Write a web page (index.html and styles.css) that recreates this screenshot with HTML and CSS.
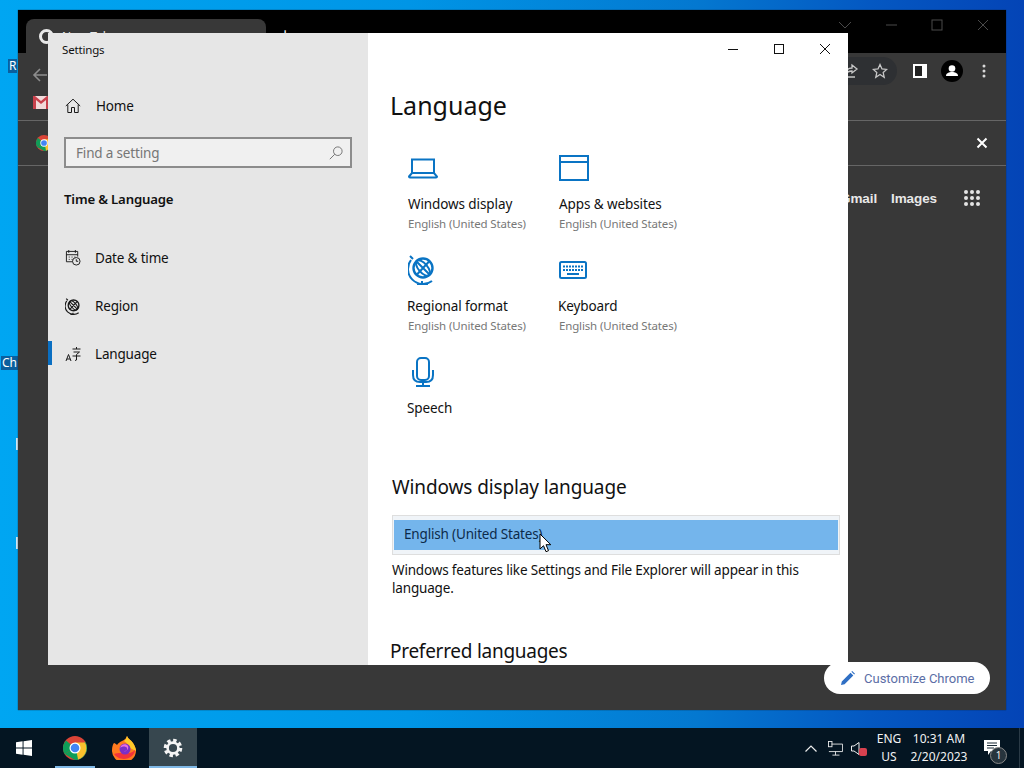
FILE: index.html
```html
<!DOCTYPE html>
<html lang="en">
<head>
  <meta charset="UTF-8" />
  <title>Settings - Language</title>
  <link rel="stylesheet" href="styles.css">
</head>
<body>
  <div class="desktop">
    <!-- Desktop icon labels, mostly hidden by the browser -->
    <span class="desk-label label-r">R</span>
    <span class="desk-label label-ch">Ch</span>
    <span class="desk-tick tick-one"></span>
    <span class="desk-tick tick-two"></span>

    <!-- Chrome window behind Settings -->
    <div class="chrome">
      <div class="tabstrip">
        <div class="tab">
          <span class="tab-icon"></span>
          <span class="tab-title">New Tab</span>
        </div>
        <span class="tab-plus">+</span>
        <div class="win-controls dim">
          <svg width="46" height="30" viewBox="0 0 46 30"><path d="M17 12l6 6 6-6" /></svg>
          <svg width="46" height="30" viewBox="0 0 46 30"><path d="M18 15h11" /></svg>
          <svg width="46" height="30" viewBox="0 0 46 30"><rect x="18" y="10" width="10" height="10" /></svg>
          <svg width="46" height="30" viewBox="0 0 46 30"><path d="M18 10l10 10M28 10L18 20" /></svg>
        </div>
      </div>
      <div class="toolbar">
        <div class="toolbar-row">
          <svg class="back-arrow" width="16" height="16" viewBox="0 0 16 16"><path d="M15 8H2M8 2L2 8l6 6" /></svg>
          <div class="omnibox">
            <svg width="16" height="16" viewBox="0 0 16 16" class="tool-line"><path d="M9 2l5 4-5 4V8C6 8 4 9 3 11c0-4 2-6 6-6zM3 14h9" /></svg>
            <svg width="16" height="16" viewBox="0 0 16 16" class="tool-line"><path d="M8 1.500l2 4.400 4.700.5-3.500 3.200 1 4.700L8 11.500l-4.200 2.800 1-4.700L1.300 6.400 6 5.900z" /></svg>
          </div>
          <svg class="tool-panel" width="14" height="14" viewBox="0 0 14 14"><path d="M0 0h14v14H0z" fill="#fff" /><path d="M2 2h7v10H2z" fill="#222" /></svg>
          <svg class="tool-avatar" width="22" height="22" viewBox="0 0 22 22"><circle cx="11" cy="11" r="11" fill="#000" /><circle cx="11" cy="8.500" r="3.300" fill="#fff" /><path d="M5 16c0-3 3-4 6-4s6 1 6 4z" fill="#fff" /></svg>
          <svg class="tool-kebab" width="4" height="14" viewBox="0 0 4 14"><circle cx="2" cy="2" r="1.500" /><circle cx="2" cy="7" r="1.500" /><circle cx="2" cy="12" r="1.500" /></svg>
        </div>
        <svg class="gmail-mark" width="16" height="13" viewBox="0 0 16 13"><path d="M0 0h16v13H0z" fill="#f2dada" /><path d="M0 0v13h3V4l5 4 5-4v9h3V0h-2L8 5 2 0z" fill="#c8414c" /></svg>
      </div>
      <div class="infobar">
        <svg class="chrome-mark" width="16" height="16" viewBox="0 0 24 24">
          <circle cx="12" cy="12" r="12" fill="#db4437" />
          <path d="M12 12L1.600 18A12 12 0 0 1 3 4.500z" fill="#0f9d58" />
          <path d="M12 12l10.400-6A12 12 0 0 1 12 24L1.600 18z" fill="#0f9d58" />
          <path d="M12 6.500h10A12 12 0 0 1 15 23.600z" fill="#fbc02d" />
          <circle cx="12" cy="12" r="5.500" fill="#fff" />
          <circle cx="12" cy="12" r="4.300" fill="#4285f4" />
        </svg>
        <svg class="infobar-close" width="12" height="12" viewBox="0 0 12 12"><path d="M1.500 1.500l9 9M10.500 1.500l-9 9" /></svg>
      </div>
      <div class="ntp">
        <div class="ntp-links">
          <span>Gmail</span>
          <span>Images</span>
          <svg width="16" height="16" viewBox="0 0 16 16">
            <circle cx="2" cy="2" r="2" /><circle cx="8" cy="2" r="2" /><circle cx="14" cy="2" r="2" />
            <circle cx="2" cy="8" r="2" /><circle cx="8" cy="8" r="2" /><circle cx="14" cy="8" r="2" />
            <circle cx="2" cy="14" r="2" /><circle cx="8" cy="14" r="2" /><circle cx="14" cy="14" r="2" />
          </svg>
        </div>
        <div class="customize">
          <svg width="14" height="14" viewBox="0 0 14 14"><path d="M0 14l.8-3.600L9.500 1.700l2.800 2.800-8.700 8.700zM10.400.8l.8-.8 2.800 2.800-.8.800z" /></svg>
          <span>Customize Chrome</span>
        </div>
      </div>
    </div>

    <!-- Settings window -->
    <div class="settings">
      <aside class="sidebar">
        <div class="app-title">Settings</div>
        <div class="nav-item nav-home">
          <svg width="16" height="16" viewBox="0 0 16 16"><path d="M.8 8L8 1.200 15.200 8M2.800 6.500V14.500H6.500V9.500H9.500V14.500H13.200V6.500" /></svg>
          <span>Home</span>
        </div>
        <div class="search">
          <span>Find a setting</span>
          <svg width="14" height="14" viewBox="0 0 14 14"><circle cx="8.800" cy="5.200" r="4.300" /><path d="M5.800 8.200L.8 13.200" /></svg>
        </div>
        <div class="nav-heading">Time &amp; Language</div>
        <div class="nav-item">
          <svg width="16" height="16" viewBox="0 0 17 17"><path d="M8 12.500H1.500V1.500h12V7M1.500 5h12M4 0v3M11 0v3M4 7.500h1M7 7.500h1M10 7.500h1M4 10h1M7 10h1" /><circle cx="12" cy="12" r="4" /><path d="M12 9.800V12h2" /></svg>
          <span>Date &amp; time</span>
        </div>
        <div class="nav-item">
          <svg width="16" height="17" viewBox="0 0 28 30"><circle cx="15" cy="13" r="9.500" stroke-width="2.400" /><ellipse cx="15" cy="13" rx="4.500" ry="9.500" transform="rotate(-40 15 13)" stroke-width="2" /><path d="M8 6l14 14M21.500 6L8.500 20M2 1l3 3M3 5a15 15 0 0 0 21 21M14 26v3M9 29h11" stroke-width="2" /></svg>
          <span>Region</span>
        </div>
        <div class="nav-item active">
          <svg width="16" height="16" viewBox="0 0 16 16"><path d="M1 15l2.500-6.500L6 15M1.800 13h3.400M7.500 3h8M11.500 1v2M8.500 6h6l-3 2.500M7.500 10h8M11.500 8.500V14l-1.500 .5" /></svg>
          <span>Language</span>
        </div>
      </aside>

      <main class="content">
        <div class="win-controls">
          <svg width="46" height="32" viewBox="0 0 46 32"><path d="M18 16.500h10" /></svg>
          <svg width="46" height="32" viewBox="0 0 46 32"><rect x="18.500" y="11.500" width="9" height="9" /></svg>
          <svg width="46" height="32" viewBox="0 0 46 32"><path d="M18 11l10 10M28 11L18 21" /></svg>
        </div>
        <h1>Language</h1>

        <div class="tiles">
          <div class="tile">
            <div class="tile-icon">
              <svg width="30" height="24" viewBox="0 0 30 24"><path d="M4 17V3.500h22V17M1 20.500L4 17h22l3 3.500q0 1-1 1H2q-1 0-1-1z" /></svg>
            </div>
            <div class="tile-name">Windows display</div>
            <div class="tile-sub">English (United States)</div>
          </div>
          <div class="tile">
            <div class="tile-icon">
              <svg width="30" height="26" viewBox="0 0 30 26"><path d="M1 1h28v24H1zM1 7h28" /></svg>
            </div>
            <div class="tile-name">Apps &amp; websites</div>
            <div class="tile-sub">English (United States)</div>
          </div>
          <div class="tile">
            <div class="tile-icon">
              <svg width="28" height="30" viewBox="0 0 28 30"><circle cx="15" cy="13" r="9.500" stroke-width="2.400" /><ellipse cx="15" cy="13" rx="4.500" ry="9.500" transform="rotate(-40 15 13)" stroke-width="2" /><path d="M8 6l14 14M21.500 6L8.500 20M2 1l3 3M3 5a15 15 0 0 0 21 21M14 26v3M9 29h11" stroke-width="2" /></svg>
            </div>
            <div class="tile-name tight">Regional format</div>
            <div class="tile-sub">English (United States)</div>
          </div>
          <div class="tile">
            <div class="tile-icon">
              <svg width="28" height="18" viewBox="0 0 28 18"><rect x="1" y="1" width="26" height="16" rx="1.500" /><path d="M4 5.500h20M4 9h20" stroke-width="2" stroke-dasharray="2 1" /><path d="M8 13h12" stroke-width="2" /></svg>
            </div>
            <div class="tile-name tight">Keyboard</div>
            <div class="tile-sub">English (United States)</div>
          </div>
          <div class="tile">
            <div class="tile-icon">
              <svg width="27" height="30" viewBox="-3 0 27 30"><rect x="6" y="1" width="12" height="22" rx="4" /><path d="M2 13v5q0 7 7 7h6q7 0 7-7v-5M12 25v3.500M5 29h14" /></svg>
            </div>
            <div class="tile-name tight">Speech</div>
          </div>
        </div>

        <h2 class="lang-heading">Windows display language</h2>
        <div class="lang-select">
          <div class="lang-option">English (United States)</div>
        </div>
        <p class="lang-note">Windows features like Settings and File Explorer will appear in this language.</p>
        <h2 class="pref-heading">Preferred languages</h2>
      </main>
    </div>

    <svg class="cursor" width="13" height="20" viewBox="0 0 13 20"><path d="M1 1v15l3.500-3.300 2.500 6 2.500-1-2.500-6h4.800z" /></svg>
  </div>

  <footer class="taskbar">
    <div class="task-btn start">
      <svg width="16" height="16" viewBox="0 0 17 17"><path d="M0 2.400l7-1v6.700H0zM8 1.300L17 0v8.100H8zM0 9h7v6.700l-7-1zM8 9h9v8l-9-1.300z" /></svg>
    </div>
    <div class="task-btn open">
      <svg width="24" height="24" viewBox="0 0 24 24">
        <circle cx="12" cy="12" r="12" fill="#db4437" />
        <path d="M12 12L1.600 18A12 12 0 0 1 3 4.500z" fill="#0f9d58" />
        <path d="M12 12l10.400-6A12 12 0 0 1 12 24L1.600 18z" fill="#0f9d58" />
        <path d="M12 6.500h10A12 12 0 0 1 15 23.600z" fill="#fbc02d" />
        <circle cx="12" cy="12" r="5.500" fill="#fff" />
        <circle cx="12" cy="12" r="4.300" fill="#4285f4" />
      </svg>
    </div>
    <div class="task-btn firefox">
      <svg width="24" height="24" viewBox="0 0 24 24">
        <path d="M15 0c1 3 4 4 6 7 2 3 3 6 3 8a12 12 0 0 1-24-1c0-3 1-6 2-7 1 0 2 1 3 2 1-2 3-3 5-4 2-1 4-2 5-5z" fill="#ff7a1f" />
        <path d="M15 0c1 3 4 4 6 7 2 3 3 6 3 8l-6-3c-1-3-3-5-6-7 2-1 2-3 3-5z" fill="#ffc928" />
        <path d="M2 18c3 5 12 7 18 2 2-2 3-4 3-6-4 4-10 4-14 3-3 0-5 0-7 1z" fill="#f2333c" />
        <circle cx="13" cy="13" r="5.500" fill="#7a2fc7" />
        <path d="M8 12c2-2 6-2 7 0 1 2-1 4-3 3 3 0 5-2 4-5-2-3-7-2-8 2z" fill="#e86ee0" />
      </svg>
    </div>
    <div class="task-btn current">
      <svg width="20" height="20" viewBox="0 0 20 20"><circle cx="10" cy="10" r="7.400" stroke-width="3.800" stroke-dasharray="3.300 2.500" /><circle cx="10" cy="10" r="5.400" stroke-width="2.600" /></svg>
    </div>

    <div class="tray">
      <svg class="tray-caret" width="12" height="7" viewBox="0 0 12 7"><path d="M.5 6.500L6 1l5.500 5.500" /></svg>
      <svg class="tray-net" width="15" height="15" viewBox="0 0 17 17"><path d="M4 3.500h12.500V12H1M8.500 12v4M5 16h8" /><rect x=".5" y=".5" width="4" height="6" /></svg>
      <div class="tray-sound">
        <svg width="9" height="13" viewBox="0 0 9 13"><path d="M.5 4v5h2.500l5 3.500V.5L3 4z" /></svg>
        <span class="mute-badge"></span>
      </div>
      <div class="tray-lang"><span>ENG</span><span>US</span></div>
      <div class="tray-clock"><span>10:31 AM</span><span>2/20/2023</span></div>
      <div class="tray-notify">
        <svg width="16" height="15" viewBox="0 0 16 15"><path d="M0 0h16v11H7l-3 4v-4H0z" fill="#fff" /><path d="M3 3h10M3 5.500h10M3 8h7" stroke="#1a2a36" /></svg>
        <span class="notify-count">1</span>
      </div>
    </div>
  </footer>
</body>
</html>
```

FILE: styles.css
```css
body {
  margin: 0;
  width: 1024px;
  height: 768px;
  overflow: hidden;
  font-family: "Noto Sans", "Open Sans", sans-serif;
  background: #041522;
}

svg {
  display: block;
  flex: none;
}

.desktop {
  position: relative;
  height: 728px;
  overflow: hidden;
  background: linear-gradient(90deg, #00a6f2 0%, #0095e6 40%, #0478d0 68%, #0458c2 85%, #0444b6 100%);
}

/* Desktop leftovers */
.desk-label {
  position: absolute;
  font-size: 12px;
  line-height: 14px;
  padding: 0 1px;
  color: #fff;
  background: #0a5f9e;
}

.label-r { left: 8px; top: 59px; }
.label-ch { left: 1px; top: 356px; }

.desk-tick {
  position: absolute;
  left: 16px;
  width: 2px;
  height: 12px;
  background: #cfe6f2;
}

.tick-one { top: 438px; }
.tick-two { top: 537px; }

/* Chrome window */
.chrome {
  position: absolute;
  left: 18px;
  top: 10px;
  width: 988px;
  height: 700px;
  display: flex;
  flex-direction: column;
  background: #383838;
  box-shadow: 0 0 1px #123;
  color: #e8e8e8;
}

.tabstrip {
  height: 43px;
  display: flex;
  background: #000;
  padding-left: 8px;
  align-items: flex-end;
}

.tab {
  width: 240px;
  height: 34px;
  display: flex;
  align-items: center;
  gap: 8px;
  padding-left: 13px;
  box-sizing: border-box;
  background: #383838;
  border-radius: 8px 8px 0 0;
  font-size: 12px;
}

.tab-icon {
  width: 9px;
  height: 9px;
  border: 3px solid #e8e8e8;
  border-radius: 50%;
}

.tab-plus {
  margin-left: 14px;
  height: 34px;
  font-size: 18px;
  line-height: 30px;
}

.win-controls {
  display: flex;
  justify-content: flex-end;
  fill: none;
  stroke: #111;
  stroke-width: 1;
}

.tabstrip .win-controls {
  margin-left: auto;
  align-self: flex-start;
}

.win-controls.dim {
  stroke: #4a4a4a;
}

.toolbar {
  height: 68px;
  box-sizing: border-box;
  padding-top: 4px;
  border-bottom: 1px solid #666;
}

.toolbar-row {
  display: flex;
  align-items: flex-start;
}

.back-arrow {
  margin: 10px 0 0 14px;
  fill: none;
  stroke: #8d8d8d;
  stroke-width: 1.600;
}

.gmail-mark {
  margin: 11px 0 0 15px;
}

.omnibox {
  width: 70px;
  height: 28px;
  margin-left: 779px;
  display: flex;
  align-items: center;
  justify-content: flex-end;
  gap: 13px;
  padding-right: 9px;
  box-sizing: border-box;
  border-radius: 0 14px 14px 0;
  background: #2e3033;
}

.tool-line {
  fill: none;
  stroke: #c8c8c8;
  stroke-width: 1.300;
}

.tool-panel { margin: 7px 0 0 16px; }
.tool-avatar { margin: 3px 0 0 14px; }
.tool-kebab { margin: 7px 0 0 19px; fill: #d8d8d8; }

.infobar {
  height: 45px;
  box-sizing: border-box;
  padding: 0 18px;
  display: flex;
  align-items: center;
  justify-content: space-between;
  border-bottom: 1px solid #666;
}

.infobar-close {
  fill: none;
  stroke: #fff;
  stroke-width: 2;
}

.ntp {
  flex: 1;
  position: relative;
}

.ntp-links {
  display: flex;
  justify-content: flex-end;
  align-items: center;
  gap: 14px;
  height: 24px;
  margin-top: 20px;
  padding-right: 26px;
  font-family: "Liberation Sans", sans-serif;
  font-size: 13.500px;
  letter-spacing: -0.1px;
  font-weight: bold;
  fill: #e4e4e4;
}

.ntp-links svg {
  margin-left: 13px;
}

.customize {
  position: absolute;
  right: 16px;
  bottom: 16px;
  width: 166px;
  height: 32px;
  display: flex;
  align-items: center;
  gap: 9px;
  padding-left: 17px;
  box-sizing: border-box;
  border-radius: 16px;
  background: #fff;
  color: #5b6ea6;
  font-family: "Roboto", sans-serif;
  font-size: 13px;
  fill: #2f6fc4;
}

/* Settings window */
.settings {
  position: absolute;
  left: 48px;
  top: 33px;
  width: 800px;
  height: 632px;
  display: flex;
  background: #fff;
  color: #111;
  overflow: hidden;
  font-size: 13.500px;
  letter-spacing: -0.17px;
}

.sidebar {
  width: 320px;
  flex: none;
  background: #e6e6e6;
  padding-top: 9px;
  box-sizing: border-box;
}

.app-title {
  height: 23px;
  margin-left: 14px;
  font-size: 11.500px;
  line-height: 16px;
}

.nav-item {
  height: 48px;
  display: flex;
  align-items: center;
  gap: 14px;
  padding-left: 17px;
  position: relative;
  fill: none;
  stroke: #1a1a1a;
  stroke-width: 1;
}

.nav-item span {
  stroke: none;
}

.nav-home {
  margin-top: 17px;
}

.nav-home span {
  margin-left: 1px;
}

.nav-item.active::before {
  content: "";
  position: absolute;
  left: 0;
  top: 11px;
  width: 4px;
  height: 24px;
  background: #0a6fc2;
}

.search {
  height: 31px;
  margin: 7px 16px 0;
  padding: 0 7px 0 10px;
  display: flex;
  align-items: center;
  justify-content: space-between;
  box-sizing: border-box;
  border: 2px solid #8c8c8c;
  background: #f0f0f0;
  color: #767676;
  fill: none;
  stroke: #777;
  stroke-width: 1;
}

.nav-heading {
  margin: 20px 0 24px 16px;
  height: 22px;
  font-size: 13.200px;
  line-height: 22px;
  font-weight: 600;
}

.content {
  flex: 1;
  padding-left: 22px;
}

.content .win-controls {
  height: 32px;
}

h1 {
  margin: 20px 0 25px;
  font-size: 25px;
  line-height: 40px;
  font-weight: 400;
  letter-spacing: 0;
}

.tiles {
  display: grid;
  grid-template-columns: 151px 151px;
  grid-auto-rows: 102px;
  padding-left: 18px;
}

.tile-icon {
  height: 36px;
  display: flex;
  align-items: center;
  fill: none;
  stroke: #0a74c4;
  stroke-width: 2;
}

.tile-name {
  margin-top: 7px;
  line-height: 22px;
  letter-spacing: -0.1px;
}

.tile-name.tight {
  margin-left: -1px;
}

.tile-sub {
  font-size: 11.500px;
  letter-spacing: -0.15px;
  line-height: 18px;
  color: #777;
}

h2 {
  margin: 0;
  font-size: 19px;
  line-height: 28px;
  font-weight: 400;
  letter-spacing: -0.12px;
}

.lang-heading {
  margin: 17px 0 14px 2px;
}

.lang-select {
  margin-left: 2px;
  width: 448px;
  height: 40px;
  padding: 4px 1px;
  box-sizing: border-box;
  border: 1px solid #dedede;
  background: #f0f4f8;
}

.lang-option {
  height: 30px;
  padding-left: 10px;
  background: #74b5ec;
  color: #0c2a4a;
  line-height: 28px;
}

.lang-note {
  margin: 6px 0 0 2px;
  width: 440px;
  line-height: 18px;
}

.pref-heading {
  margin-top: 40px;
  letter-spacing: -0.27px;
}

.cursor {
  position: absolute;
  left: 539px;
  top: 533px;
  fill: #fff;
  stroke: #000;
  stroke-width: 1;
}

/* Taskbar */
.taskbar {
  height: 40px;
  display: flex;
  background: #041522;
  color: #f2f2f2;
}

.task-btn {
  width: 48px;
  height: 40px;
  display: flex;
  align-items: center;
  justify-content: center;
  box-sizing: border-box;
}

.start {
  fill: #fff;
}

.open {
  margin-left: 3px;
  background: linear-gradient(#7fb8e6, #7fb8e6) center bottom / 40px 2px no-repeat;
}

.firefox {
  margin-left: 1px;
}

.current {
  margin-left: 1px;
  background: #37474f;
  box-shadow: inset 0 -2px 0 #7fb8e6;
  fill: none;
  stroke: #f4f4f4;
}

.tray {
  margin-left: auto;
  display: flex;
  align-items: center;
  font-size: 12px;
  padding-right: 4px;
}

.tray-caret {
  fill: none;
  stroke: #eee;
  stroke-width: 1.200;
}

.tray-net {
  margin-left: 11px;
  fill: none;
  stroke: #eee;
}

.tray-sound {
  position: relative;
  margin-left: 8px;
  width: 17px;
  fill: none;
  stroke: #eee;
}

.mute-badge {
  position: absolute;
  left: 8px;
  top: 6px;
  width: 8px;
  height: 8px;
  border-radius: 2px;
  background: #d8414f;
}

.tray-lang,
.tray-clock {
  display: flex;
  flex-direction: column;
  align-items: center;
  line-height: 18px;
}

.tray-lang {
  width: 28px;
  margin-left: 7px;
}

.tray-clock {
  width: 60px;
  margin-left: 6px;
}

.tray-notify {
  position: relative;
  margin-left: 15px;
  width: 36px;
  height: 40px;
  padding-top: 12px;
  box-sizing: border-box;
  border-right: 1px solid #2a3a46;
}

.notify-count {
  position: absolute;
  left: 6px;
  top: 19px;
  width: 15px;
  height: 15px;
  border: 1px solid #888;
  border-radius: 50%;
  background: #27343d;
  font-size: 10px;
  line-height: 15px;
  text-align: center;
}
```
